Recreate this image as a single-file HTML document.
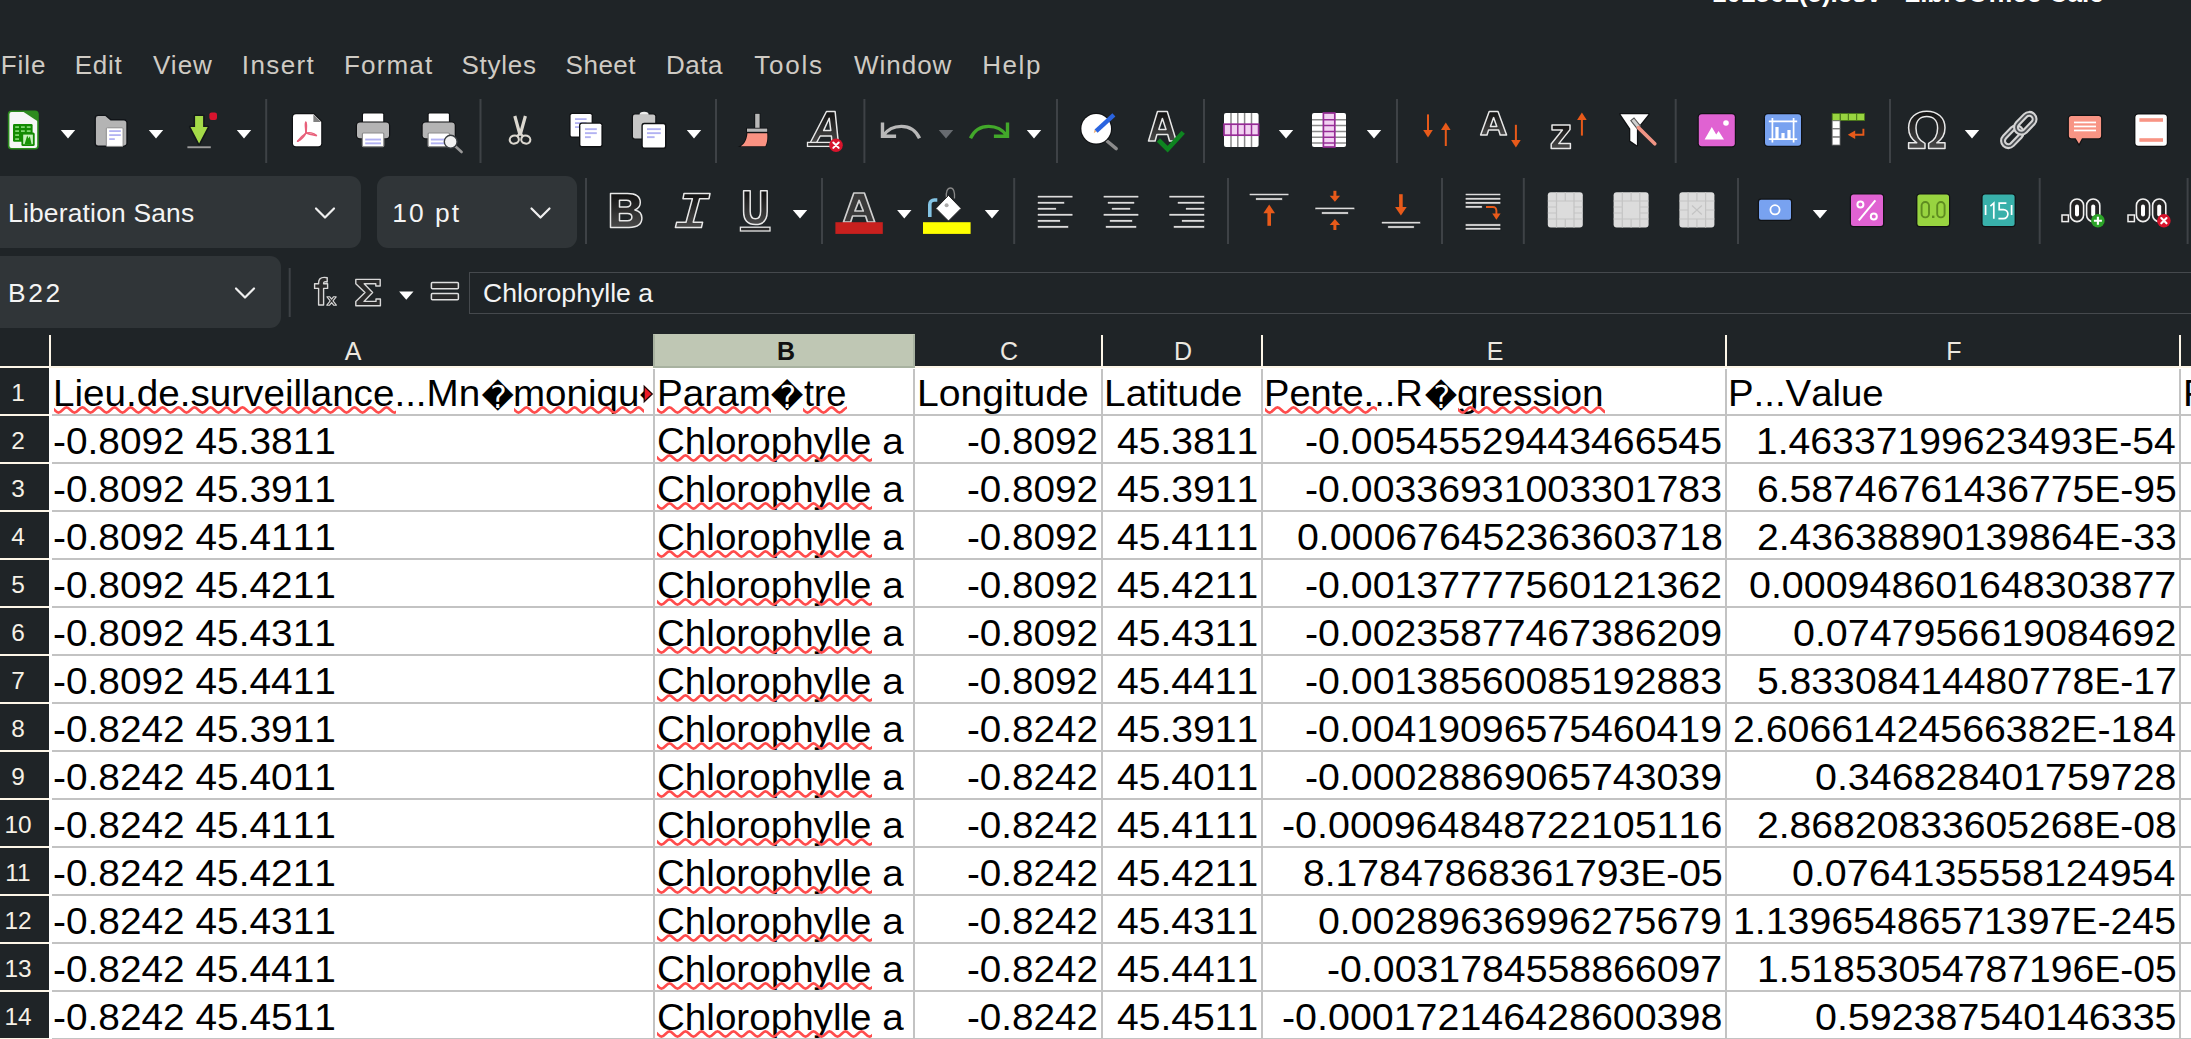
<!DOCTYPE html><html><head><meta charset="utf-8"><title>LibreOffice Calc</title><style>html,body{margin:0;padding:0;background:#1f2427;}
#app{position:relative;width:2191px;height:1039px;overflow:hidden;background:#1f2427;font-family:"Liberation Sans",sans-serif;color:#f2f2f2;}
#app *{box-sizing:border-box;}
#title{position:absolute;left:1712px;top:-22.6px;line-height:32px;font-size:26px;font-weight:bold;color:#fff;white-space:nowrap;}
.menu{position:absolute;top:49px;font-size:26px;line-height:32px;color:#cfcbc4;white-space:nowrap;}
.sep{position:absolute;width:2px;background:#3d4145;}
.box{position:absolute;background:#303538;border-radius:11px;}
.ui{position:absolute;font-size:26.4px;line-height:32px;color:#f4f4f4;white-space:nowrap;}
svg{position:absolute;overflow:visible;}
#sheet{position:absolute;left:0;top:0;width:2191px;height:1039px;}
#sheet:before{content:"";position:absolute;left:49px;top:366px;width:2142px;height:673px;background:#fff;}
.ch{position:absolute;top:335px;height:31px;text-align:center;font-size:25px;line-height:31px;color:#ece8e0;}
.ch span{position:relative;left:1px;top:1px;}
.ch.sel{top:334px;height:34px;background:#bfc7b4;color:#111;font-weight:bold;border:2px solid #a8b2a0;border-top:1px solid #bfc7b4;}
.ch.sel span{top:1px;left:2px;}
.chl{position:absolute;top:335px;width:2px;height:33px;background:#fdf6e8;}
.chb{position:absolute;top:366px;left:0;width:2191px;height:2px;background:#fdf6e8;}
.rh{position:absolute;left:0;width:49px;height:46px;background:#1f2427;font-size:24.4px;line-height:46px;color:#f6f1e6;}
.rh span{position:absolute;left:-7px;width:50px;text-align:center;top:2px;}
.rhl{position:absolute;left:0;width:49px;height:2px;background:#fdf6e8;}
.gh{position:absolute;left:52px;width:2139px;height:2px;background:#c3c3c3;}
.gv{position:absolute;top:369px;width:2px;height:670px;background:#c3c3c3;}
.t{position:absolute;height:47px;font-size:37.5px;line-height:47px;color:#000;white-space:pre;font-kerning:none;transform-origin:0 50%;padding-top:3px;}
.rc{position:absolute;height:47px;line-height:47px;color:#000;font-family:"DejaVu Sans",sans-serif;padding-top:6.8px;}
.clipA{position:absolute;left:0;top:0;width:644px;height:1039px;overflow:hidden;}
.wv{overflow:hidden;}
.wv path{fill:none;stroke:#ff4c4c;stroke-width:2.6;}
.inp{position:absolute;left:469px;top:272px;width:1740px;height:42px;border:1.3px solid #45494d;background:#1f2427;}
</style></head><body>
<div id="app">
<div id="title">101561(5).csv - LibreOffice Calc</div>
<div class="menu" style="left:0.7px;letter-spacing:0.93px">File</div>
<div class="menu" style="left:74.7px;letter-spacing:0.77px">Edit</div>
<div class="menu" style="left:153px;letter-spacing:1px">View</div>
<div class="menu" style="left:241.8px;letter-spacing:1.4px">Insert</div>
<div class="menu" style="left:344px;letter-spacing:1.16px">Format</div>
<div class="menu" style="left:461.5px;letter-spacing:0.74px">Styles</div>
<div class="menu" style="left:565.6px;letter-spacing:0.5px">Sheet</div>
<div class="menu" style="left:666px;letter-spacing:0.5px">Data</div>
<div class="menu" style="left:754.3px;letter-spacing:1.75px">Tools</div>
<div class="menu" style="left:853.9px;letter-spacing:1.0px">Window</div>
<div class="menu" style="left:982.2px;letter-spacing:1.6px">Help</div>
<div class="box" style="left:-20px;top:176px;width:381px;height:72px"></div>
<div class="box" style="left:377px;top:176px;width:200px;height:72px"></div>
<div class="box" style="left:-20px;top:256px;width:301px;height:72px"></div>
<div class="ui" style="left:8px;top:197px;letter-spacing:.2px">Liberation Sans</div>
<div class="ui" style="left:392.3px;top:197px;letter-spacing:2px">10 pt</div>
<div class="ui" style="left:8px;top:277px;letter-spacing:2.6px">B22</div>
<div class="inp"></div>
<div class="ui" style="left:483px;top:277px;font-size:26.6px">Chlorophylle a</div>
<svg id="tb" style="left:0;top:0" width="2191" height="335" viewBox="0 0 2191 335">
<defs><linearGradient id="gd" x1="0" y1="0" x2="0" y2="1"><stop offset="0" stop-color="#111"/><stop offset="1" stop-color="#4a4a4a"/></linearGradient></defs>
<rect x="265.2" y="99" width="2" height="64" fill="#3e4246"/>
<rect x="479.5" y="99" width="2" height="64" fill="#3e4246"/>
<rect x="715.0" y="99" width="2" height="64" fill="#3e4246"/>
<rect x="863.4" y="99" width="2" height="64" fill="#3e4246"/>
<rect x="1056.0" y="99" width="2" height="64" fill="#3e4246"/>
<rect x="1203.0" y="99" width="2" height="64" fill="#3e4246"/>
<rect x="1396.0" y="99" width="2" height="64" fill="#3e4246"/>
<rect x="1674.7" y="99" width="2" height="64" fill="#3e4246"/>
<rect x="1889.0" y="99" width="2" height="64" fill="#3e4246"/>
<rect x="585.0" y="178" width="2" height="66" fill="#3e4246"/>
<rect x="821.0" y="178" width="2" height="66" fill="#3e4246"/>
<rect x="1013.2" y="178" width="2" height="66" fill="#3e4246"/>
<rect x="1227.0" y="178" width="2" height="66" fill="#3e4246"/>
<rect x="1441.0" y="178" width="2" height="66" fill="#3e4246"/>
<rect x="1522.8" y="178" width="2" height="66" fill="#3e4246"/>
<rect x="1737.0" y="178" width="2" height="66" fill="#3e4246"/>
<rect x="2038.7" y="178" width="2" height="66" fill="#3e4246"/>
<rect x="2186.6" y="178" width="2" height="66" fill="#3e4246"/>
<rect x="288.7" y="268" width="2" height="49" fill="#3e4246"/>
<path d="M60.8 130h14.4l-7.2 8.4z" fill="#fff"/>
<path d="M148.8 130h14.4l-7.2 8.4z" fill="#fff"/>
<path d="M236.8 130h14.4l-7.2 8.4z" fill="#fff"/>
<path d="M686.8 130h14.4l-7.2 8.4z" fill="#fff"/>
<path d="M1026.8 130h14.4l-7.2 8.4z" fill="#fff"/>
<path d="M1278.8 130h14.4l-7.2 8.4z" fill="#fff"/>
<path d="M1366.8 130h14.4l-7.2 8.4z" fill="#fff"/>
<path d="M1964.8 130h14.4l-7.2 8.4z" fill="#fff"/>
<path d="M938.8 130h14.4l-7.2 8.4z" fill="#676b70"/>
<path d="M792.8 210h14.4l-7.2 8.4z" fill="#fff"/>
<path d="M897.1 210h14.4l-7.2 8.4z" fill="#fff"/>
<path d="M984.8 210h14.4l-7.2 8.4z" fill="#fff"/>
<path d="M1812.8 210h14.4l-7.2 8.4z" fill="#fff"/>
<path d="M399.1 291.5h14.4l-7.2 8.2z" fill="#fff"/>
<path d="M316 208.5L325.0 217.5L334 208.5" fill="none" stroke="#f0f0f0" stroke-width="2.2" stroke-linecap="round" stroke-linejoin="round"/>
<path d="M531.5 208.5L540.5 217.5L549.5 208.5" fill="none" stroke="#f0f0f0" stroke-width="2.2" stroke-linecap="round" stroke-linejoin="round"/>
<path d="M236 288.5L245.0 297.5L254 288.5" fill="none" stroke="#f0f0f0" stroke-width="2.2" stroke-linecap="round" stroke-linejoin="round"/>
<!-- ROW 1 -->
<!-- new spreadsheet -->
<g>
<rect x="8.6" y="111.3" width="29.4" height="37.4" rx="3" fill="#f6f6f6" stroke="#2a8a1c" stroke-width="1.6"/>
<path d="M22.5 111.3H35a3 3 0 0 1 3 3V121.5z" fill="#2e8b1f"/>
<rect x="13" y="124" width="19.6" height="17.8" rx="1.2" fill="#128a02"/>
<g fill="#7ed66e"><rect x="15.2" y="126.2" width="3.8" height="1.8"/><rect x="21" y="126.2" width="3.8" height="1.8"/><rect x="26.8" y="126.2" width="3.8" height="1.8"/>
<rect x="15.2" y="130.2" width="3.8" height="1.8"/><rect x="21" y="130.2" width="3.8" height="1.8"/><rect x="26.8" y="130.2" width="3.8" height="1.8"/>
<rect x="15.2" y="134.2" width="3.8" height="1.8"/><rect x="15.2" y="138.2" width="3.8" height="1.8"/></g>
<rect x="21.4" y="132.6" width="13.3" height="13.4" rx="1.5" fill="#128a02"/>
<rect x="23.2" y="134.6" width="9.7" height="9.6" fill="#c6f0bc"/>
<path d="M24.6 144.2L27.2 135.4L28.6 138.6L29.8 136.2L31.6 144.2z" fill="#1a9408"/>
</g>
<!-- open -->
<g>
<path d="M95.2 118.4a3 3 0 0 1 3-3h7.6l5 4.4h13.2a3 3 0 0 1 3 3v20.4a3 3 0 0 1-3 3H98.2a3 3 0 0 1-3-3z" fill="#b4b4b4" stroke="#111418" stroke-width="1.4"/>
<rect x="106.3" y="127.8" width="16.8" height="18.6" rx="1" fill="#fff" stroke="#8a8a8a" stroke-width="1"/>
<g fill="#b2b2f2"><rect x="109.2" y="130.2" width="11.6" height="1.8"/><rect x="109.2" y="134.2" width="11.6" height="1.8"/><rect x="109.2" y="138.2" width="5.6" height="1.8"/></g>
</g>
<!-- save -->
<g>
<path d="M195.100 116h8v11h4.600L199.100 143.600L190.500 127h4.600z" fill="#a4da48" stroke="#14181a" stroke-width="3.2" paint-order="stroke" stroke-linejoin="round"/>
<rect x="187.400" y="146.300" width="23.400" height="1.900" fill="#9c9c9c"/>
<rect x="209.400" y="112.400" width="7.600" height="7.600" rx="2.200" fill="#d8142e"/>
</g>
<!-- pdf -->
<g>
<path d="M296 114.200h17.600l7.600 7.600v21.400a3 3 0 0 1-3 3H296a3 3 0 0 1-3-3v-26a3 3 0 0 1 3-3z" fill="#fff" stroke="#101214" stroke-width="2.4" paint-order="stroke"/>
<path d="M313.400 114.400l7.600 7.600h-7.600z" fill="#808080"/>
<g fill="none" stroke="#e8607a" stroke-width="1.500" stroke-linecap="round" stroke-linejoin="round">
<path d="M305.800 122.300c-1.300 1.200 .300 6.800 .000 10.800c-1.800 3.800 -5.000 6.600 -8.200 8.200"/>
<path d="M305.800 122.300c1.400 1.000 .300 6.400 .400 10.400c2.800 2.000 7.200 2.400 10.200 2.800"/>
<path d="M297.600 141.300c2.200 -3.000 5.000 -6.000 8.200 -8.000c3.200 -1.200 7.800 -.600 10.600 2.200"/>
</g>
</g>
<!-- print -->
<g>
<rect x="363" y="113.6" width="20.2" height="10" rx="1" fill="#fff" stroke="#101214" stroke-width="2.4" paint-order="stroke"/>
<rect x="357" y="122.6" width="32" height="15.6" rx="3" fill="#b4b4b4" stroke="#101214" stroke-width="2.4" paint-order="stroke"/>
<rect x="362.4" y="133" width="21.4" height="13.6" rx="1" fill="#fff" stroke="#8c8c8c" stroke-width="1.2"/>
<rect x="365.200" y="138.600" width="15.800" height="1.900" fill="#b2b2f2"/><rect x="365.200" y="142.400" width="15.800" height="1.900" fill="#b2b2f2"/>
</g>
<!-- print preview -->
<g>
<g transform="translate(65.700 0)">
<rect x="363" y="113.6" width="20.2" height="10" rx="1" fill="#fff" stroke="#101214" stroke-width="2.4" paint-order="stroke"/>
<rect x="357" y="122.6" width="32" height="15.6" rx="3" fill="#b4b4b4" stroke="#101214" stroke-width="2.4" paint-order="stroke"/>
<rect x="362.4" y="133" width="21.4" height="13.6" rx="1" fill="#fff" stroke="#8c8c8c" stroke-width="1.2"/>
<rect x="365.200" y="138.600" width="15.800" height="1.900" fill="#b2b2f2"/><rect x="365.200" y="142.400" width="15.800" height="1.900" fill="#b2b2f2"/>
</g>
<line x1="455" y1="146" x2="461.600" y2="152" stroke="#9a9a9a" stroke-width="2.600" stroke-linecap="round"/>
<circle cx="450.700" cy="141.700" r="6.400" fill="#f2f2f2" stroke="#3a3e42" stroke-width="1.400"/>
</g>
<!-- cut -->
<g fill="none" stroke="#dcd8d0" stroke-width="2.100" stroke-linejoin="round">
<path d="M514.800 116l5.400 19.500M525.400 116L520 135.500" stroke-width="3.200"/>
<ellipse cx="514.300" cy="139.600" rx="4.600" ry="4" transform="rotate(-20 514.300 139.600)"/>
<ellipse cx="525.800" cy="139.600" rx="4.600" ry="4" transform="rotate(20 525.800 139.600)"/>
<path d="M517.400 136.200l2.700 -3.600l2.700 3.600"/>
</g>
<!-- copy -->
<g>
<rect x="570.600" y="114" width="21" height="22.600" rx="1.500" fill="#fff" stroke="#101214" stroke-width="2.4" paint-order="stroke"/>
<g fill="#b2b2f2"><rect x="575" y="118.200" width="11.600" height="1.800"/><rect x="575" y="122.200" width="11.600" height="1.800"/><rect x="575" y="126.200" width="5" height="1.800"/></g>
<rect x="580.400" y="123.800" width="21" height="22.200" rx="1.500" fill="#fff" stroke="#101214" stroke-width="2.8" paint-order="stroke"/>
<g fill="#b2b2f2"><rect x="585" y="128.200" width="11.800" height="1.900"/><rect x="585" y="132.200" width="11.800" height="1.900"/><rect x="585" y="136.200" width="5.800" height="1.900"/></g>
</g>
<!-- paste -->
<g>
<rect x="633" y="114.600" width="22.200" height="23.800" rx="2" fill="#c6c6c6" stroke="#101214" stroke-width="2.4" paint-order="stroke"/>
<path d="M639.500 114.800a4.600 3 0 0 1 9.200 0z" fill="#ededed"/>
<rect x="642.800" y="124.200" width="22.200" height="23.200" rx="1.500" fill="#fff" stroke="#101214" stroke-width="2.8" paint-order="stroke"/>
<g fill="#b2b2f2"><rect x="647" y="128.200" width="13.800" height="1.900"/><rect x="647" y="132.200" width="13.800" height="1.900"/><rect x="647" y="136.200" width="7.600" height="1.900"/></g>
</g>
<!-- clone brush -->
<g>
<rect x="755.200" y="113.800" width="4.400" height="16" fill="#b8b8b8" stroke="#101214" stroke-width="1.6" paint-order="stroke"/>
<rect x="747" y="128.600" width="20.200" height="3.200" fill="#b8b8b8" stroke="#101214" stroke-width="1.6" paint-order="stroke"/>
<path d="M747.400 133.200h19.800c.400 4.400 .200 9.400 -1.800 13.000h-24.600c4.600 -3.000 6.200 -7.800 6.600 -13.000z" fill="#fa9282" stroke="#101214" stroke-width="1.8" paint-order="stroke"/>
</g>
<!-- clear formatting -->
<g>
<path d="M826.500 111.500h8.600l3.400 32.500h-6.400l-.700 -8h-11.200l-4.400 8h-6.200zM829.200 118.200l-5.600 12.400h7.200z" fill="url(#gd)" stroke="#e8e8e8" stroke-width="1.500" stroke-linejoin="round" fill-rule="evenodd"/>
<rect x="807.500" y="142.400" width="23" height="4" fill="#2a2a2a" stroke="#e8e8e8" stroke-width="1.300"/>
<circle cx="836" cy="145.200" r="6.800" fill="#d8142c"/>
<path d="M833.300 142.500l5.400 5.400m0 -5.400l-5.400 5.400" stroke="#fff" stroke-width="2" stroke-linecap="round"/>
</g>
<!-- undo -->
<path d="M882.500 122.600v13.600h13.600M883.500 135.400c7.500 -11.000 28.000 -14.000 36.000 2.800" fill="none" stroke="#b8b8b8" stroke-width="3.400"/>
<!-- redo -->
<path d="M1007.500 122.600v13.600h-13.600M1006.500 135.400c-7.500 -11.000 -28.000 -14.000 -36.000 2.800" fill="none" stroke="#42a82a" stroke-width="3.400"/>
<!-- find & replace -->
<g>
<line x1="1107" y1="141" x2="1116.200" y2="148.600" stroke="#8c8c8c" stroke-width="3.400" stroke-linecap="round"/>
<circle cx="1096.200" cy="128.800" r="14.800" fill="#fff" stroke="#101214" stroke-width="2.4" paint-order="stroke"/>
<path d="M1096.500 131.200l-2.700 2.100l.8 -3.700z" fill="#f0b070"/>
<path d="M1094.600 129.600l17.800 -16.400l3 3.200l-17.800 16.400z" fill="#2a64e0"/>
</g>
<!-- spelling -->
<g>
<path d="M1157.500 111.500h9.800l9 29.500h-6.800l-1.800 -6.500h-10.800l-1.800 6.500h-6.600zM1162.400 118.400l-3.600 11h7.200z" fill="url(#gd)" stroke="#e8e8e8" stroke-width="1.500" stroke-linejoin="round" fill-rule="evenodd"/>
<path d="M1158.400 140l9.200 9.200l15.600 -17" fill="none" stroke="#0e8420" stroke-width="4.600"/>
</g>
<!-- insert rows -->
<g>
<rect x="1224" y="113" width="34.600" height="34" rx="2" fill="#fff"/>
<g stroke="#8a8a8a" stroke-width="1.500"><path d="M1231 113v34M1237.800 113v34M1244.600 113v34M1251.500 113v34"/></g>
<rect x="1224" y="124.200" width="34.600" height="11" fill="#f2d2f2" stroke="#962c96" stroke-width="1.700"/>
<g stroke="#962c96" stroke-width="1.500"><path d="M1231 124.200v11M1237.800 124.200v11M1244.600 124.200v11M1251.500 124.200v11"/></g>
</g>
<!-- insert cols -->
<g>
<rect x="1312" y="113" width="34" height="34" rx="2" fill="#fff"/>
<g stroke="#8a8a8a" stroke-width="1.500"><path d="M1312 119.800h34M1312 125.600h34M1312 131.400h34M1312 137.200h34M1312 143h34" /></g>
<rect x="1323.400" y="113" width="11.400" height="34" fill="#f2d2f2" stroke="#962c96" stroke-width="1.700"/>
<g stroke="#962c96" stroke-width="1.500"><path d="M1323.400 119.800h11.400M1323.400 125.600h11.400M1323.400 131.400h11.400M1323.400 137.200h11.400M1323.400 143h11.400"/></g>
</g>
<!-- sort -->
<g fill="#e85a1a" stroke="none">
<rect x="1427" y="114.400" width="2" height="16"/><path d="M1423.200 130l4.800 7.600l4.800 -7.600z"/>
<rect x="1444.800" y="130" width="2" height="16"/><path d="M1441 130l4.800 -7.600l4.800 7.600z"/>
</g>
<!-- sort asc -->
<g>
<path d="M1489.200 111.500h8.800l8.600 23.500h-6.400l-1.600 -5h-10l-1.600 5h-6.400zM1493.600 117.600l-3.200 9h6.400z" fill="url(#gd)" stroke="#e8e8e8" stroke-width="1.500" stroke-linejoin="round" fill-rule="evenodd"/>
<g fill="#e85a1a"><rect x="1514.900" y="124.800" width="2" height="16"/><path d="M1511.100 140l4.800 7.600l4.800 -7.600z"/></g>
</g>
<!-- sort desc -->
<g>
<path d="M1552 125h18v4.600l-11.200 14h11.600v5h-19.200v-4.600l11.200 -14h-10.400z" fill="url(#gd)" stroke="#e8e8e8" stroke-width="1.500" stroke-linejoin="round"/>
<g fill="#e85a1a"><rect x="1580.900" y="119.600" width="2" height="16"/><path d="M1577.100 120l4.800 -7.600l4.800 7.600z"/></g>
</g>
<!-- autofilter -->
<g>
<path d="M1620.500 114.200h28l-11.600 14.600v16.400l-6.600 -4.400v-12z" fill="#fff" stroke="#101214" stroke-width="2.6" paint-order="stroke" stroke-linejoin="round"/>
<path d="M1630.800 120.600l3.200 -2.600l6.400 8l-3.200 2.600z" fill="#d0d0d0" stroke="#555" stroke-width="1.100"/>
<path d="M1638.400 127.600l16.400 16.200" stroke="#f09484" stroke-width="3.600" stroke-linecap="round"/>
</g>
<!-- image -->
<g>
<rect x="1698.800" y="114.200" width="36" height="32" rx="3" fill="#e062d2" stroke="#101214" stroke-width="2.4" paint-order="stroke"/>
<circle cx="1726" cy="123" r="2.800" fill="#fff"/>
<path d="M1704.600 139.400l7.200 -12.400l4.400 7.400l2.400 -3.400l5.400 8.400z" fill="#fff"/>
</g>
<!-- chart -->
<g>
<rect x="1765" y="114.200" width="36" height="31.600" rx="3" fill="#78a2f0" stroke="#101214" stroke-width="2.4" paint-order="stroke"/>
<g stroke="#fff" stroke-width="1.700" fill="none"><path d="M1772.400 118v24.600M1793.600 118v24.600M1768.800 121.400h28.400M1768.800 139.200h28.400"/></g>
<g fill="#fff"><rect x="1775.400" y="127" width="3.200" height="12"/><rect x="1781.400" y="133" width="3.200" height="6"/><rect x="1787.400" y="130" width="3.200" height="9"/></g>
</g>
<!-- pivot -->
<g>
<g fill="#98d440" stroke="#4a7a18" stroke-width=".800"><rect x="1832.200" y="113.600" width="7.800" height="6.800"/><rect x="1840.400" y="113.600" width="7.800" height="6.800"/><rect x="1848.600" y="113.600" width="7.800" height="6.800"/><rect x="1856.800" y="113.600" width="7.800" height="6.800"/></g>
<g fill="#fff" stroke="#777" stroke-width=".800"><rect x="1832.200" y="120.800" width="7.800" height="7.800"/><rect x="1832.200" y="129" width="7.800" height="7.800"/><rect x="1832.200" y="137.200" width="7.800" height="7.800"/></g>
<path d="M1863.400 128.800v6h-10" fill="none" stroke="#e85a1a" stroke-width="1.900"/>
<path d="M1855.200 130.600l-7.400 4.200l7.400 4.200z" fill="#e85a1a"/>
</g>
<!-- omega -->
<path d="M1908.600 148.400v-5.600h8.200c-5.600 -3.600 -8.200 -8.600 -8.200 -15.000c0 -10.000 7.400 -16.600 18.200 -16.600s18.200 6.600 18.200 16.600c0 6.400 -2.600 11.400 -8.200 15.000h8.200v5.600h-16.400v-5.000c6.200 -3.000 9.000 -8.000 9.000 -15.200c0 -7.400 -4.200 -11.600 -10.800 -11.600s-10.800 4.200 -10.800 11.600c0 7.200 2.800 12.200 9.000 15.200v5.000z" fill="url(#gd)" stroke="#e8e8e8" stroke-width="1.500" stroke-linejoin="round"/>
<!-- link -->
<g fill="none" transform="rotate(-46 2018.800 130)">
<rect x="1998.450" y="124.700" width="22" height="10.600" rx="5.300" stroke-width="6" stroke="#d4d4d4"/>
<rect x="1998.450" y="124.700" width="22" height="10.600" rx="5.300" stroke-width="1.800" stroke="#4a4e52"/>
<rect x="2017.150" y="124.700" width="22" height="10.600" rx="5.300" stroke-width="6" stroke="#d4d4d4"/>
<rect x="2017.150" y="124.700" width="22" height="10.600" rx="5.300" stroke-width="1.800" stroke="#4a4e52"/>
</g>
<!-- comment -->
<g>
<path d="M2071.500 116h27a2.600 2.600 0 0 1 2.600 2.600v17a2.600 2.600 0 0 1 -2.600 2.600h-16.500l-3 5.600l-3.400 -5.600h-4.100a2.600 2.600 0 0 1 -2.600 -2.600v-17a2.600 2.600 0 0 1 2.600 -2.600z" fill="#f89484" stroke="#101214" stroke-width="2.4" paint-order="stroke"/>
<g fill="#fff"><rect x="2074" y="121.600" width="22" height="1.700"/><rect x="2074" y="125.600" width="22" height="1.700"/><rect x="2074" y="129.600" width="22" height="1.700"/><rect x="2074" y="133.600" width="22" height="1.700" opacity=".0"/></g>
</g>
<!-- header footer -->
<g>
<rect x="2135.400" y="114.400" width="31.400" height="31.400" rx="3" fill="#fff" stroke="#101214" stroke-width="2.4" paint-order="stroke"/>
<rect x="2139.400" y="118.200" width="23.600" height="3.600" fill="#f89484"/><rect x="2139.400" y="138.200" width="23.600" height="3.600" fill="#f89484"/>
</g>
<!-- ROW 2 -->
<!-- bold -->
<path d="M610.500 193.500h17c8 0 12.800 3.200 12.800 9c0 3.800 -2.200 6.200 -5.400 7.400c4.400 1 7 4 7 8.200c0 6 -4.800 9.400 -13 9.400h-18.400zM619.500 200.200v6.800h7c2.600 0 4.200 -1.200 4.200 -3.400s-1.600 -3.400 -4.200 -3.400zM619.500 213.400v7.400h7.800c3 0 4.600 -1.400 4.600 -3.700s-1.600 -3.700 -4.600 -3.700z" fill="url(#gd)" stroke="#e8e8e8" stroke-width="1.500" stroke-linejoin="round" fill-rule="evenodd"/>
<!-- italic -->
<path d="M684 193.500h26l-1 5.200h-9.400l-6.400 23.600h9.400l-1.200 5.200h-26l1.200 -5.200h9.400l6.400 -23.600h-9.400z" fill="url(#gd)" stroke="#e8e8e8" stroke-width="1.500" stroke-linejoin="round"/>
<!-- underline -->
<g>
<path d="M743.600 190.800h6.600v20.400c0 5 1.800 7.600 5.200 7.600s5.200 -2.600 5.200 -7.600v-20.400h6.600v20.800c0 8.600 -4.200 13 -11.800 13s-11.800 -4.400 -11.800 -13z" fill="url(#gd)" stroke="#e8e8e8" stroke-width="1.500" stroke-linejoin="round"/>
<rect x="740.400" y="227.200" width="29.600" height="3.800" fill="#2a2a2a" stroke="#e8e8e8" stroke-width="1.300"/>
</g>
<!-- font color -->
<g>
<path d="M853.800 193h10.600l10.400 29.200h-7.200l-2 -6.200h-13l-2 6.200h-7.200zM859.100 200.400l-4.200 10.600h8.400z" fill="#3a3a3a" stroke="#d0d0d0" stroke-width="1.700" stroke-linejoin="round" fill-rule="evenodd"/>
<rect x="835.400" y="222.200" width="47.400" height="11.700" fill="#c8201e"/>
</g>
<!-- background color -->
<g>
<path d="M929.800 217v-12.500a4.500 4.500 0 0 1 4.500 -4.500h3" fill="none" stroke="#84c4e4" stroke-width="3.600"/>
<path d="M946.500 198.500c-1 -7 1 -10.500 4 -10.500s4.500 4 4 10.500" fill="none" stroke="#888" stroke-width="1.300"/>
<path d="M948.500 195.400l12.600 13l-12.600 12.600l-12.600 -12.600z" fill="#fff" stroke="#222" stroke-width="1"/>
<circle cx="946.600" cy="205.200" r="2" fill="#aaa"/>
<rect x="923" y="222.200" width="47.600" height="11.700" fill="#ffff00"/>
</g>
<!-- align left/center/right -->
<g fill="#dcdcdc" stroke="#15181b" stroke-width=".6">
<rect x="1037.300" y="195.500" width="35.600" height="2.400"/><rect x="1037.300" y="201.600" width="27.300" height="2.400"/><rect x="1037.300" y="207.600" width="19" height="2.400"/><rect x="1037.300" y="213.600" width="35.600" height="2.400"/><rect x="1037.300" y="219.700" width="23" height="2.400"/><rect x="1037.300" y="225.700" width="31.300" height="2.400"/>
<rect x="1103.200" y="195.500" width="35.600" height="2.400"/><rect x="1107.400" y="201.600" width="27.300" height="2.400"/><rect x="1111.500" y="207.600" width="19" height="2.400"/><rect x="1103.200" y="213.600" width="35.600" height="2.400"/><rect x="1109.500" y="219.700" width="23" height="2.400"/><rect x="1105.400" y="225.700" width="31.300" height="2.400"/>
<rect x="1169" y="195.500" width="35.600" height="2.400"/><rect x="1177.300" y="201.600" width="27.300" height="2.400"/><rect x="1185.600" y="207.600" width="19" height="2.400"/><rect x="1169" y="213.600" width="35.600" height="2.400"/><rect x="1181.600" y="219.700" width="23" height="2.400"/><rect x="1173.300" y="225.700" width="31.300" height="2.400"/>
</g>
<!-- valign top -->
<g fill="#dcdcdc" stroke="#15181b" stroke-width=".6"><rect x="1249.200" y="193.300" width="39.700" height="2.400"/><rect x="1255.600" y="197.800" width="26.900" height="2.400"/></g>
<g fill="#e85a1a"><rect x="1267.400" y="212" width="3.600" height="13.800"/><path d="M1263.400 213.200l5.800 -8.600l5.800 8.600z"/></g>
<!-- valign center -->
<g fill="#dcdcdc" stroke="#15181b" stroke-width=".6"><rect x="1315" y="207.200" width="39.800" height="2.400"/><rect x="1321.400" y="211.800" width="27" height="2.400"/></g>
<g fill="#e85a1a"><rect x="1333.400" y="190.800" width="3" height="6"/><path d="M1329.700 195.800l5.200 6l5.200 -6z"/><rect x="1333.400" y="224" width="3" height="6"/><path d="M1329.700 225l5.200 -6l5.200 6z"/></g>
<!-- valign bottom -->
<g fill="#dcdcdc" stroke="#15181b" stroke-width=".6"><rect x="1381.400" y="221.500" width="39.200" height="2.400"/><rect x="1387.800" y="225.800" width="26.400" height="2.400"/></g>
<g fill="#e85a1a"><rect x="1399.100" y="194.200" width="3.600" height="13.800"/><path d="M1395.100 207l5.800 8.600l5.800 -8.600z"/></g>
<!-- wrap text -->
<g fill="#dcdcdc" stroke="#15181b" stroke-width=".6"><rect x="1465.200" y="193.300" width="35.600" height="2.400"/><rect x="1465.200" y="197.600" width="35.600" height="2.400"/><rect x="1465.200" y="201.700" width="35.600" height="2.400"/><rect x="1465.200" y="205.700" width="17" height="2.400"/><rect x="1465.200" y="223.800" width="35.600" height="2.400"/><rect x="1465.200" y="227.600" width="35.600" height="2.400"/></g>
<path d="M1486 207h7a3.400 3.400 0 0 1 3.400 3.400v4" fill="none" stroke="#e85a1a" stroke-width="1.900"/><path d="M1492.200 213.400l4.200 6.400l4.200 -6.400z" fill="#e85a1a"/>
<!-- merge icons (disabled) -->
<g>
<rect x="1547.800" y="192.200" width="35" height="35.400" rx="3" fill="#dcdcdc"/>
<g stroke="#c4c4c4" stroke-width="1.200" fill="none"><path d="M1547.800 201h35M1547.800 219h35M1556.500 192.200v8.800M1565.300 192.200v8.800M1574 192.200v8.800M1556.500 219v8.600M1565.300 219v8.600M1574 219v8.600M1556.500 201v18M1547.800 207h8.700M1547.800 213h8.700M1574 201v18M1574 207h8.800M1574 213h8.800"/></g>
</g>
<g transform="translate(65.800 0)">
<rect x="1547.800" y="192.200" width="35" height="35.400" rx="3" fill="#dcdcdc"/>
<g stroke="#c4c4c4" stroke-width="1.200" fill="none"><path d="M1547.800 201h35M1547.800 219h35M1556.500 192.200v8.800M1565.300 192.200v8.800M1574 192.200v8.800M1556.500 219v8.600M1565.300 219v8.600M1574 219v8.600M1556.500 201v18M1547.800 207h8.700M1547.800 213h8.700M1574 201v18M1574 207h8.800M1574 213h8.800"/></g>
</g>
<g>
<rect x="1679.400" y="192.200" width="35" height="35.400" rx="3" fill="#dcdcdc"/>
<g stroke="#c4c4c4" stroke-width="1.200" fill="none"><path d="M1679.400 201h35M1679.400 219h35M1688.100 192.200v35.400M1705.600 192.200v35.400M1696.900 192.200v8.800M1696.900 219v8.600M1679.400 210h8.700M1705.600 210h8.800M1692 205.500l4.900 4.500l-4.900 4.500M1701.800 205.500l-4.900 4.500l4.900 4.500"/></g>
</g>
<!-- currency -->
<g>
<rect x="1759" y="199.800" width="32" height="20" rx="2" fill="#78a2f0" stroke="#101214" stroke-width="2.4" paint-order="stroke"/>
<circle cx="1775" cy="209.800" r="4.600" fill="none" stroke="#fff" stroke-width="1.800"/>
</g>
<!-- percent -->
<g>
<rect x="1851" y="194.600" width="32" height="31.400" rx="2.500" fill="#e062d2" stroke="#101214" stroke-width="2.4" paint-order="stroke"/>
<g fill="none" stroke="#fff" stroke-width="2"><circle cx="1860.400" cy="204.400" r="3"/><circle cx="1873.800" cy="216.400" r="3"/><path d="M1875.400 200.400l-16.600 20"/></g>
</g>
<!-- number -->
<g>
<rect x="1917.400" y="194.600" width="31.600" height="31.400" rx="2.500" fill="#98d440" stroke="#101214" stroke-width="2.4" paint-order="stroke"/>
<g fill="none" stroke="#5e8c20" stroke-width="1.900"><rect x="1921.600" y="202" width="7.400" height="15.400" rx="3.600"/><rect x="1937.200" y="202" width="7.400" height="15.400" rx="3.600"/></g>
<rect x="1932" y="215.600" width="2.400" height="2.400" fill="#5e8c20"/>
</g>
<!-- date -->
<g>
<rect x="1982.600" y="194.600" width="32" height="31.400" rx="2.500" fill="#38b0aa" stroke="#101214" stroke-width="2.4" paint-order="stroke"/>
<g fill="none" stroke="#fff" stroke-width="1.700"><path d="M1985.600 205v10M2011.600 205v10M1990.400 206.200l3.400 -3v15.600M2006.400 203.200h-7.200v6.400h4.200a3.400 3.400 0 0 1 0 9.000h-5"/></g>
</g>
<!-- add decimal -->
<g>
<rect x="2062" y="215" width="6.4" height="6.600" fill="#222" stroke="#f0f0f0" stroke-width="1.500"/>
<rect x="2070.400" y="199" width="13.200" height="22.600" rx="6.600" fill="#242424" stroke="#f0f0f0" stroke-width="1.600"/>
<rect x="2075" y="204.400" width="4" height="12" rx="2" fill="#fff"/>
<rect x="2086.600" y="199" width="13.200" height="22.600" rx="6.600" fill="#242424" stroke="#f0f0f0" stroke-width="1.600"/>
<rect x="2091.200" y="204.400" width="4" height="12" rx="2" fill="#fff"/>
</g>
<circle cx="2097.900" cy="220.700" r="6.800" fill="#2ca428"/><path d="M2093.900 220.700h8m-4 -4v8" stroke="#fff" stroke-width="2.100"/>
<g transform="translate(66 0)">
<rect x="2062" y="215" width="6.4" height="6.600" fill="#222" stroke="#f0f0f0" stroke-width="1.500"/>
<rect x="2070.400" y="199" width="13.200" height="22.600" rx="6.600" fill="#242424" stroke="#f0f0f0" stroke-width="1.600"/>
<rect x="2075" y="204.400" width="4" height="12" rx="2" fill="#fff"/>
<rect x="2086.600" y="199" width="13.200" height="22.600" rx="6.600" fill="#242424" stroke="#f0f0f0" stroke-width="1.600"/>
<rect x="2091.200" y="204.400" width="4" height="12" rx="2" fill="#fff"/>
</g>
<circle cx="2163.900" cy="220.700" r="6.800" fill="#d8142c"/><path d="M2161.300 218.100l5.200 5.200m0 -5.200l-5.200 5.200" stroke="#fff" stroke-width="2.100" stroke-linecap="round"/>
<!-- formula bar icons -->
<g>
<path d="M322.600 305v-16.600h-4v-4.600h4v-1c0 -3.400 2 -5.400 5.600 -5.400c1.200 0 2.200 .2 3 .4v4.200c-2.200 -.6 -3.600 -.2 -3.600 1.600v.2h4v4.600h-4v16.600z" transform="translate(-4 0)" fill="#2a2a2a" stroke="#d8d8d8" stroke-width="1.400" stroke-linejoin="round"/>
<path d="M327 296.800h2.800l1.800 2.400l1.800 -2.400h2.800l-3.200 4.100l3.400 4.300h-2.800l-2 -2.600l-2 2.600h-2.800l3.400 -4.300z" fill="#2a2a2a" stroke="#d8d8d8" stroke-width="1.100" stroke-linejoin="round"/>
<path d="M355.800 279.400h24.400v6.600h-4.400v-2.200h-11.600l8.400 8.600l-8.600 9h12v-2.400h4.400v6.800h-24.600v-4.400l9.200 -9l-9.200 -8.600z" fill="#2a2a2a" stroke="#d8d8d8" stroke-width="1.400" stroke-linejoin="round"/>
<rect x="431.400" y="282.400" width="27" height="6.400" rx="1" fill="#2a2a2a" stroke="#e0e0e0" stroke-width="1.500"/>
<rect x="431.400" y="293.400" width="27" height="6.400" rx="1" fill="#2a2a2a" stroke="#e0e0e0" stroke-width="1.500"/>
</g>

</svg>
<div id="sheet">
<div class="chb"></div>
<div class="ch" style="left:51px;width:602px"><span>A</span></div>
<div class="ch sel" style="left:653px;width:262px"><span>B</span></div>
<div class="ch" style="left:915px;width:186px"><span>C</span></div>
<div class="ch" style="left:1103px;width:158px"><span>D</span></div>
<div class="ch" style="left:1263px;width:462px"><span>E</span></div>
<div class="ch" style="left:1727px;width:452px"><span>F</span></div>
<div class="chl" style="left:49px"></div>
<div class="chl" style="left:1101px"></div>
<div class="chl" style="left:1261px"></div>
<div class="chl" style="left:1725px"></div>
<div class="chl" style="left:2179px"></div>
<div class="rh" style="top:368px"><span>1</span></div>
<div class="rhl" style="top:414px"></div>
<div class="rh" style="top:416px"><span>2</span></div>
<div class="rhl" style="top:462px"></div>
<div class="rh" style="top:464px"><span>3</span></div>
<div class="rhl" style="top:510px"></div>
<div class="rh" style="top:512px"><span>4</span></div>
<div class="rhl" style="top:558px"></div>
<div class="rh" style="top:560px"><span>5</span></div>
<div class="rhl" style="top:606px"></div>
<div class="rh" style="top:608px"><span>6</span></div>
<div class="rhl" style="top:654px"></div>
<div class="rh" style="top:656px"><span>7</span></div>
<div class="rhl" style="top:702px"></div>
<div class="rh" style="top:704px"><span>8</span></div>
<div class="rhl" style="top:750px"></div>
<div class="rh" style="top:752px"><span>9</span></div>
<div class="rhl" style="top:798px"></div>
<div class="rh" style="top:800px"><span>10</span></div>
<div class="rhl" style="top:846px"></div>
<div class="rh" style="top:848px"><span>11</span></div>
<div class="rhl" style="top:894px"></div>
<div class="rh" style="top:896px"><span>12</span></div>
<div class="rhl" style="top:942px"></div>
<div class="rh" style="top:944px"><span>13</span></div>
<div class="rhl" style="top:990px"></div>
<div class="rh" style="top:992px"><span>14</span></div>
<div class="rhl" style="top:1038px"></div>
<div class="gh" style="top:414px"></div>
<div class="gh" style="top:462px"></div>
<div class="gh" style="top:510px"></div>
<div class="gh" style="top:558px"></div>
<div class="gh" style="top:606px"></div>
<div class="gh" style="top:654px"></div>
<div class="gh" style="top:702px"></div>
<div class="gh" style="top:750px"></div>
<div class="gh" style="top:798px"></div>
<div class="gh" style="top:846px"></div>
<div class="gh" style="top:894px"></div>
<div class="gh" style="top:942px"></div>
<div class="gh" style="top:990px"></div>
<div class="gh" style="top:1038px"></div>
<div class="gv" style="left:653px"></div>
<div class="gv" style="left:913px"></div>
<div class="gv" style="left:1101px"></div>
<div class="gv" style="left:1261px"></div>
<div class="gv" style="left:1725px"></div>
<div class="gv" style="left:2179px"></div>
<div class="clipA">
<span class="t " style="left:52.68px;top:367px;transform:scaleX(1.0300)">Lieu.de.surveillance...Mn</span>
<svg class="wv" style="left:53.5px;top:404.1px" width="342.1" height="12" viewBox="0 -6 342.1 12"><path d="M-11.5 2.6 C-8.59 2.6 -6.41 -2.6 -3.5 -2.6 C-0.59 -2.6 1.59 2.6 4.5 2.6 C7.41 2.6 9.59 -2.6 12.5 -2.6 C15.41 -2.6 17.59 2.6 20.5 2.6 C23.41 2.6 25.59 -2.6 28.5 -2.6 C31.41 -2.6 33.59 2.6 36.5 2.6 C39.41 2.6 41.59 -2.6 44.5 -2.6 C47.41 -2.6 49.59 2.6 52.5 2.6 C55.41 2.6 57.59 -2.6 60.5 -2.6 C63.41 -2.6 65.59 2.6 68.5 2.6 C71.41 2.6 73.59 -2.6 76.5 -2.6 C79.41 -2.6 81.59 2.6 84.5 2.6 C87.41 2.6 89.59 -2.6 92.5 -2.6 C95.41 -2.6 97.59 2.6 100.5 2.6 C103.41 2.6 105.59 -2.6 108.5 -2.6 C111.41 -2.6 113.59 2.6 116.5 2.6 C119.41 2.6 121.59 -2.6 124.5 -2.6 C127.41 -2.6 129.59 2.6 132.5 2.6 C135.41 2.6 137.59 -2.6 140.5 -2.6 C143.41 -2.6 145.59 2.6 148.5 2.6 C151.41 2.6 153.59 -2.6 156.5 -2.6 C159.41 -2.6 161.59 2.6 164.5 2.6 C167.41 2.6 169.59 -2.6 172.5 -2.6 C175.41 -2.6 177.59 2.6 180.5 2.6 C183.41 2.6 185.59 -2.6 188.5 -2.6 C191.41 -2.6 193.59 2.6 196.5 2.6 C199.41 2.6 201.59 -2.6 204.5 -2.6 C207.41 -2.6 209.59 2.6 212.5 2.6 C215.41 2.6 217.59 -2.6 220.5 -2.6 C223.41 -2.6 225.59 2.6 228.5 2.6 C231.41 2.6 233.59 -2.6 236.5 -2.6 C239.41 -2.6 241.59 2.6 244.5 2.6 C247.41 2.6 249.59 -2.6 252.5 -2.6 C255.41 -2.6 257.59 2.6 260.5 2.6 C263.41 2.6 265.59 -2.6 268.5 -2.6 C271.41 -2.6 273.59 2.6 276.5 2.6 C279.41 2.6 281.59 -2.6 284.5 -2.6 C287.41 -2.6 289.59 2.6 292.5 2.6 C295.41 2.6 297.59 -2.6 300.5 -2.6 C303.41 -2.6 305.59 2.6 308.5 2.6 C311.41 2.6 313.59 -2.6 316.5 -2.6 C319.41 -2.6 321.59 2.6 324.5 2.6 C327.41 2.6 329.59 -2.6 332.5 -2.6 C335.41 -2.6 337.59 2.6 340.5 2.6 C343.41 2.6 345.59 -2.6 348.5 -2.6 C351.41 -2.6 353.59 2.6 356.5 2.6"/></svg>
<span class="rc" style="left:481.44px;top:367px;font-size:31.63px">�</span>
<span class="t " style="left:513.19px;top:367px;transform:scaleX(1.0270)">moniqu</span>
<svg class="wv" style="left:514.0px;top:404.1px" width="130.0" height="12" viewBox="0 -6 130.0 12"><path d="M-11.5 2.6 C-8.59 2.6 -6.41 -2.6 -3.5 -2.6 C-0.59 -2.6 1.59 2.6 4.5 2.6 C7.41 2.6 9.59 -2.6 12.5 -2.6 C15.41 -2.6 17.59 2.6 20.5 2.6 C23.41 2.6 25.59 -2.6 28.5 -2.6 C31.41 -2.6 33.59 2.6 36.5 2.6 C39.41 2.6 41.59 -2.6 44.5 -2.6 C47.41 -2.6 49.59 2.6 52.5 2.6 C55.41 2.6 57.59 -2.6 60.5 -2.6 C63.41 -2.6 65.59 2.6 68.5 2.6 C71.41 2.6 73.59 -2.6 76.5 -2.6 C79.41 -2.6 81.59 2.6 84.5 2.6 C87.41 2.6 89.59 -2.6 92.5 -2.6 C95.41 -2.6 97.59 2.6 100.5 2.6 C103.41 2.6 105.59 -2.6 108.5 -2.6 C111.41 -2.6 113.59 2.6 116.5 2.6 C119.41 2.6 121.59 -2.6 124.5 -2.6 C127.41 -2.6 129.59 2.6 132.5 2.6 C135.41 2.6 137.59 -2.6 140.5 -2.6"/></svg>
<span class="rc" style="left:639.84px;top:367px;font-size:31.63px">�</span>
</div>
<svg class="ovf" style="left:643px;top:385px" width="11" height="18" viewBox="0 0 11 18"><path d="M1.2 1.2 L9.3 9 L1.2 16.8 Z" fill="#ee1c25" stroke="#1a0000" stroke-width="1.2"/></svg>
<span class="t " style="left:656.58px;top:367px;transform:scaleX(1.0305)">Param</span>
<svg class="wv" style="left:657.4px;top:404.1px" width="113.4" height="12" viewBox="0 -6 113.4 12"><path d="M-11.5 2.6 C-8.59 2.6 -6.41 -2.6 -3.5 -2.6 C-0.59 -2.6 1.59 2.6 4.5 2.6 C7.41 2.6 9.59 -2.6 12.5 -2.6 C15.41 -2.6 17.59 2.6 20.5 2.6 C23.41 2.6 25.59 -2.6 28.5 -2.6 C31.41 -2.6 33.59 2.6 36.5 2.6 C39.41 2.6 41.59 -2.6 44.5 -2.6 C47.41 -2.6 49.59 2.6 52.5 2.6 C55.41 2.6 57.59 -2.6 60.5 -2.6 C63.41 -2.6 65.59 2.6 68.5 2.6 C71.41 2.6 73.59 -2.6 76.5 -2.6 C79.41 -2.6 81.59 2.6 84.5 2.6 C87.41 2.6 89.59 -2.6 92.5 -2.6 C95.41 -2.6 97.59 2.6 100.5 2.6 C103.41 2.6 105.59 -2.6 108.5 -2.6 C111.41 -2.6 113.59 2.6 116.5 2.6 C119.41 2.6 121.59 -2.6 124.5 -2.6"/></svg>
<span class="rc" style="left:770.74px;top:367px;font-size:31.83px">�</span>
<span class="t " style="left:803.80px;top:367px;transform:scaleX(0.9660)">tre</span>
<svg class="wv" style="left:803.4px;top:404.1px" width="43.6" height="12" viewBox="0 -6 43.6 12"><path d="M-11.5 2.6 C-8.59 2.6 -6.41 -2.6 -3.5 -2.6 C-0.59 -2.6 1.59 2.6 4.5 2.6 C7.41 2.6 9.59 -2.6 12.5 -2.6 C15.41 -2.6 17.59 2.6 20.5 2.6 C23.41 2.6 25.59 -2.6 28.5 -2.6 C31.41 -2.6 33.59 2.6 36.5 2.6 C39.41 2.6 41.59 -2.6 44.5 -2.6 C47.41 -2.6 49.59 2.6 52.5 2.6"/></svg>
<span class="t " style="left:916.55px;top:367px;transform:scaleX(1.0425)">Longitude</span>
<span class="t " style="left:1103.96px;top:367px;transform:scaleX(1.0370)">Latitude</span>
<span class="t " style="left:1264.42px;top:367px;transform:scaleX(1.0160)">Pente...R</span>
<svg class="wv" style="left:1265.2px;top:404.1px" width="111.8" height="12" viewBox="0 -6 111.8 12"><path d="M-11.5 2.6 C-8.59 2.6 -6.41 -2.6 -3.5 -2.6 C-0.59 -2.6 1.59 2.6 4.5 2.6 C7.41 2.6 9.59 -2.6 12.5 -2.6 C15.41 -2.6 17.59 2.6 20.5 2.6 C23.41 2.6 25.59 -2.6 28.5 -2.6 C31.41 -2.6 33.59 2.6 36.5 2.6 C39.41 2.6 41.59 -2.6 44.5 -2.6 C47.41 -2.6 49.59 2.6 52.5 2.6 C55.41 2.6 57.59 -2.6 60.5 -2.6 C63.41 -2.6 65.59 2.6 68.5 2.6 C71.41 2.6 73.59 -2.6 76.5 -2.6 C79.41 -2.6 81.59 2.6 84.5 2.6 C87.41 2.6 89.59 -2.6 92.5 -2.6 C95.41 -2.6 97.59 2.6 100.5 2.6 C103.41 2.6 105.59 -2.6 108.5 -2.6 C111.41 -2.6 113.59 2.6 116.5 2.6 C119.41 2.6 121.59 -2.6 124.5 -2.6"/></svg>
<span class="rc" style="left:1424.74px;top:367px;font-size:31.63px">�</span>
<span class="t " style="left:1457.39px;top:367px;transform:scaleX(1.0350)">gression</span>
<svg class="wv" style="left:1457.6px;top:404.1px" width="147.0" height="12" viewBox="0 -6 147.0 12"><path d="M-11.5 2.6 C-8.59 2.6 -6.41 -2.6 -3.5 -2.6 C-0.59 -2.6 1.59 2.6 4.5 2.6 C7.41 2.6 9.59 -2.6 12.5 -2.6 C15.41 -2.6 17.59 2.6 20.5 2.6 C23.41 2.6 25.59 -2.6 28.5 -2.6 C31.41 -2.6 33.59 2.6 36.5 2.6 C39.41 2.6 41.59 -2.6 44.5 -2.6 C47.41 -2.6 49.59 2.6 52.5 2.6 C55.41 2.6 57.59 -2.6 60.5 -2.6 C63.41 -2.6 65.59 2.6 68.5 2.6 C71.41 2.6 73.59 -2.6 76.5 -2.6 C79.41 -2.6 81.59 2.6 84.5 2.6 C87.41 2.6 89.59 -2.6 92.5 -2.6 C95.41 -2.6 97.59 2.6 100.5 2.6 C103.41 2.6 105.59 -2.6 108.5 -2.6 C111.41 -2.6 113.59 2.6 116.5 2.6 C119.41 2.6 121.59 -2.6 124.5 -2.6 C127.41 -2.6 129.59 2.6 132.5 2.6 C135.41 2.6 137.59 -2.6 140.5 -2.6 C143.41 -2.6 145.59 2.6 148.5 2.6 C151.41 2.6 153.59 -2.6 156.5 -2.6"/></svg>
<span class="t " style="left:1728.40px;top:367px;transform:scaleX(1.0230)">P...Value</span>
<span class="t " style="left:2182.98px;top:367px;transform:scaleX(1.0300)">R</span>
<span class="t " style="left:52.99px;top:415px;transform:scaleX(1.0356)">-0.8092 45.3811</span>
<span class="t " style="left:656.59px;top:415px;transform:scaleX(1.0290)">Chlorophylle a</span>
<svg class="wv" style="left:657.4px;top:452.1px" width="215.1" height="12" viewBox="0 -6 215.1 12"><path d="M-11.5 2.6 C-8.59 2.6 -6.41 -2.6 -3.5 -2.6 C-0.59 -2.6 1.59 2.6 4.5 2.6 C7.41 2.6 9.59 -2.6 12.5 -2.6 C15.41 -2.6 17.59 2.6 20.5 2.6 C23.41 2.6 25.59 -2.6 28.5 -2.6 C31.41 -2.6 33.59 2.6 36.5 2.6 C39.41 2.6 41.59 -2.6 44.5 -2.6 C47.41 -2.6 49.59 2.6 52.5 2.6 C55.41 2.6 57.59 -2.6 60.5 -2.6 C63.41 -2.6 65.59 2.6 68.5 2.6 C71.41 2.6 73.59 -2.6 76.5 -2.6 C79.41 -2.6 81.59 2.6 84.5 2.6 C87.41 2.6 89.59 -2.6 92.5 -2.6 C95.41 -2.6 97.59 2.6 100.5 2.6 C103.41 2.6 105.59 -2.6 108.5 -2.6 C111.41 -2.6 113.59 2.6 116.5 2.6 C119.41 2.6 121.59 -2.6 124.5 -2.6 C127.41 -2.6 129.59 2.6 132.5 2.6 C135.41 2.6 137.59 -2.6 140.5 -2.6 C143.41 -2.6 145.59 2.6 148.5 2.6 C151.41 2.6 153.59 -2.6 156.5 -2.6 C159.41 -2.6 161.59 2.6 164.5 2.6 C167.41 2.6 169.59 -2.6 172.5 -2.6 C175.41 -2.6 177.59 2.6 180.5 2.6 C183.41 2.6 185.59 -2.6 188.5 -2.6 C191.41 -2.6 193.59 2.6 196.5 2.6 C199.41 2.6 201.59 -2.6 204.5 -2.6 C207.41 -2.6 209.59 2.6 212.5 2.6 C215.41 2.6 217.59 -2.6 220.5 -2.6 C223.41 -2.6 225.59 2.6 228.5 2.6"/></svg>
<span class="t " style="left:967.49px;top:415px;transform:scaleX(1.0290)">-0.8092</span>
<span class="t " style="left:1117.04px;top:415px;transform:scaleX(1.0420)">45.3811</span>
<span class="t " style="left:1305.36px;top:415px;transform:scaleX(1.0470)">-0.00545529443466545</span>
<span class="t " style="left:1755.90px;top:415px;transform:scaleX(1.0430)">1.46337199623493E-54</span>
<span class="t " style="left:52.99px;top:463px;transform:scaleX(1.0356)">-0.8092 45.3911</span>
<span class="t " style="left:656.59px;top:463px;transform:scaleX(1.0290)">Chlorophylle a</span>
<svg class="wv" style="left:657.4px;top:500.1px" width="215.1" height="12" viewBox="0 -6 215.1 12"><path d="M-11.5 2.6 C-8.59 2.6 -6.41 -2.6 -3.5 -2.6 C-0.59 -2.6 1.59 2.6 4.5 2.6 C7.41 2.6 9.59 -2.6 12.5 -2.6 C15.41 -2.6 17.59 2.6 20.5 2.6 C23.41 2.6 25.59 -2.6 28.5 -2.6 C31.41 -2.6 33.59 2.6 36.5 2.6 C39.41 2.6 41.59 -2.6 44.5 -2.6 C47.41 -2.6 49.59 2.6 52.5 2.6 C55.41 2.6 57.59 -2.6 60.5 -2.6 C63.41 -2.6 65.59 2.6 68.5 2.6 C71.41 2.6 73.59 -2.6 76.5 -2.6 C79.41 -2.6 81.59 2.6 84.5 2.6 C87.41 2.6 89.59 -2.6 92.5 -2.6 C95.41 -2.6 97.59 2.6 100.5 2.6 C103.41 2.6 105.59 -2.6 108.5 -2.6 C111.41 -2.6 113.59 2.6 116.5 2.6 C119.41 2.6 121.59 -2.6 124.5 -2.6 C127.41 -2.6 129.59 2.6 132.5 2.6 C135.41 2.6 137.59 -2.6 140.5 -2.6 C143.41 -2.6 145.59 2.6 148.5 2.6 C151.41 2.6 153.59 -2.6 156.5 -2.6 C159.41 -2.6 161.59 2.6 164.5 2.6 C167.41 2.6 169.59 -2.6 172.5 -2.6 C175.41 -2.6 177.59 2.6 180.5 2.6 C183.41 2.6 185.59 -2.6 188.5 -2.6 C191.41 -2.6 193.59 2.6 196.5 2.6 C199.41 2.6 201.59 -2.6 204.5 -2.6 C207.41 -2.6 209.59 2.6 212.5 2.6 C215.41 2.6 217.59 -2.6 220.5 -2.6 C223.41 -2.6 225.59 2.6 228.5 2.6"/></svg>
<span class="t " style="left:967.49px;top:463px;transform:scaleX(1.0290)">-0.8092</span>
<span class="t " style="left:1117.04px;top:463px;transform:scaleX(1.0420)">45.3911</span>
<span class="t " style="left:1305.36px;top:463px;transform:scaleX(1.0470)">-0.00336931003301783</span>
<span class="t " style="left:1756.51px;top:463px;transform:scaleX(1.0430)">6.58746761436775E-95</span>
<span class="t " style="left:52.99px;top:511px;transform:scaleX(1.0356)">-0.8092 45.4111</span>
<span class="t " style="left:656.59px;top:511px;transform:scaleX(1.0290)">Chlorophylle a</span>
<svg class="wv" style="left:657.4px;top:548.1px" width="215.1" height="12" viewBox="0 -6 215.1 12"><path d="M-11.5 2.6 C-8.59 2.6 -6.41 -2.6 -3.5 -2.6 C-0.59 -2.6 1.59 2.6 4.5 2.6 C7.41 2.6 9.59 -2.6 12.5 -2.6 C15.41 -2.6 17.59 2.6 20.5 2.6 C23.41 2.6 25.59 -2.6 28.5 -2.6 C31.41 -2.6 33.59 2.6 36.5 2.6 C39.41 2.6 41.59 -2.6 44.5 -2.6 C47.41 -2.6 49.59 2.6 52.5 2.6 C55.41 2.6 57.59 -2.6 60.5 -2.6 C63.41 -2.6 65.59 2.6 68.5 2.6 C71.41 2.6 73.59 -2.6 76.5 -2.6 C79.41 -2.6 81.59 2.6 84.5 2.6 C87.41 2.6 89.59 -2.6 92.5 -2.6 C95.41 -2.6 97.59 2.6 100.5 2.6 C103.41 2.6 105.59 -2.6 108.5 -2.6 C111.41 -2.6 113.59 2.6 116.5 2.6 C119.41 2.6 121.59 -2.6 124.5 -2.6 C127.41 -2.6 129.59 2.6 132.5 2.6 C135.41 2.6 137.59 -2.6 140.5 -2.6 C143.41 -2.6 145.59 2.6 148.5 2.6 C151.41 2.6 153.59 -2.6 156.5 -2.6 C159.41 -2.6 161.59 2.6 164.5 2.6 C167.41 2.6 169.59 -2.6 172.5 -2.6 C175.41 -2.6 177.59 2.6 180.5 2.6 C183.41 2.6 185.59 -2.6 188.5 -2.6 C191.41 -2.6 193.59 2.6 196.5 2.6 C199.41 2.6 201.59 -2.6 204.5 -2.6 C207.41 -2.6 209.59 2.6 212.5 2.6 C215.41 2.6 217.59 -2.6 220.5 -2.6 C223.41 -2.6 225.59 2.6 228.5 2.6"/></svg>
<span class="t " style="left:967.49px;top:511px;transform:scaleX(1.0290)">-0.8092</span>
<span class="t " style="left:1117.04px;top:511px;transform:scaleX(1.0420)">45.4111</span>
<span class="t " style="left:1296.60px;top:511px;transform:scaleX(1.0470)">0.000676452363603718</span>
<span class="t " style="left:1756.51px;top:511px;transform:scaleX(1.0430)">2.43638890139864E-33</span>
<span class="t " style="left:52.99px;top:559px;transform:scaleX(1.0356)">-0.8092 45.4211</span>
<span class="t " style="left:656.59px;top:559px;transform:scaleX(1.0290)">Chlorophylle a</span>
<svg class="wv" style="left:657.4px;top:596.1px" width="215.1" height="12" viewBox="0 -6 215.1 12"><path d="M-11.5 2.6 C-8.59 2.6 -6.41 -2.6 -3.5 -2.6 C-0.59 -2.6 1.59 2.6 4.5 2.6 C7.41 2.6 9.59 -2.6 12.5 -2.6 C15.41 -2.6 17.59 2.6 20.5 2.6 C23.41 2.6 25.59 -2.6 28.5 -2.6 C31.41 -2.6 33.59 2.6 36.5 2.6 C39.41 2.6 41.59 -2.6 44.5 -2.6 C47.41 -2.6 49.59 2.6 52.5 2.6 C55.41 2.6 57.59 -2.6 60.5 -2.6 C63.41 -2.6 65.59 2.6 68.5 2.6 C71.41 2.6 73.59 -2.6 76.5 -2.6 C79.41 -2.6 81.59 2.6 84.5 2.6 C87.41 2.6 89.59 -2.6 92.5 -2.6 C95.41 -2.6 97.59 2.6 100.5 2.6 C103.41 2.6 105.59 -2.6 108.5 -2.6 C111.41 -2.6 113.59 2.6 116.5 2.6 C119.41 2.6 121.59 -2.6 124.5 -2.6 C127.41 -2.6 129.59 2.6 132.5 2.6 C135.41 2.6 137.59 -2.6 140.5 -2.6 C143.41 -2.6 145.59 2.6 148.5 2.6 C151.41 2.6 153.59 -2.6 156.5 -2.6 C159.41 -2.6 161.59 2.6 164.5 2.6 C167.41 2.6 169.59 -2.6 172.5 -2.6 C175.41 -2.6 177.59 2.6 180.5 2.6 C183.41 2.6 185.59 -2.6 188.5 -2.6 C191.41 -2.6 193.59 2.6 196.5 2.6 C199.41 2.6 201.59 -2.6 204.5 -2.6 C207.41 -2.6 209.59 2.6 212.5 2.6 C215.41 2.6 217.59 -2.6 220.5 -2.6 C223.41 -2.6 225.59 2.6 228.5 2.6"/></svg>
<span class="t " style="left:967.49px;top:559px;transform:scaleX(1.0290)">-0.8092</span>
<span class="t " style="left:1117.04px;top:559px;transform:scaleX(1.0420)">45.4211</span>
<span class="t " style="left:1305.36px;top:559px;transform:scaleX(1.0470)">-0.00137777560121362</span>
<span class="t " style="left:1749.08px;top:559px;transform:scaleX(1.0505)">0.000948601648303877</span>
<span class="t " style="left:52.99px;top:607px;transform:scaleX(1.0356)">-0.8092 45.4311</span>
<span class="t " style="left:656.59px;top:607px;transform:scaleX(1.0290)">Chlorophylle a</span>
<svg class="wv" style="left:657.4px;top:644.1px" width="215.1" height="12" viewBox="0 -6 215.1 12"><path d="M-11.5 2.6 C-8.59 2.6 -6.41 -2.6 -3.5 -2.6 C-0.59 -2.6 1.59 2.6 4.5 2.6 C7.41 2.6 9.59 -2.6 12.5 -2.6 C15.41 -2.6 17.59 2.6 20.5 2.6 C23.41 2.6 25.59 -2.6 28.5 -2.6 C31.41 -2.6 33.59 2.6 36.5 2.6 C39.41 2.6 41.59 -2.6 44.5 -2.6 C47.41 -2.6 49.59 2.6 52.5 2.6 C55.41 2.6 57.59 -2.6 60.5 -2.6 C63.41 -2.6 65.59 2.6 68.5 2.6 C71.41 2.6 73.59 -2.6 76.5 -2.6 C79.41 -2.6 81.59 2.6 84.5 2.6 C87.41 2.6 89.59 -2.6 92.5 -2.6 C95.41 -2.6 97.59 2.6 100.5 2.6 C103.41 2.6 105.59 -2.6 108.5 -2.6 C111.41 -2.6 113.59 2.6 116.5 2.6 C119.41 2.6 121.59 -2.6 124.5 -2.6 C127.41 -2.6 129.59 2.6 132.5 2.6 C135.41 2.6 137.59 -2.6 140.5 -2.6 C143.41 -2.6 145.59 2.6 148.5 2.6 C151.41 2.6 153.59 -2.6 156.5 -2.6 C159.41 -2.6 161.59 2.6 164.5 2.6 C167.41 2.6 169.59 -2.6 172.5 -2.6 C175.41 -2.6 177.59 2.6 180.5 2.6 C183.41 2.6 185.59 -2.6 188.5 -2.6 C191.41 -2.6 193.59 2.6 196.5 2.6 C199.41 2.6 201.59 -2.6 204.5 -2.6 C207.41 -2.6 209.59 2.6 212.5 2.6 C215.41 2.6 217.59 -2.6 220.5 -2.6 C223.41 -2.6 225.59 2.6 228.5 2.6"/></svg>
<span class="t " style="left:967.49px;top:607px;transform:scaleX(1.0290)">-0.8092</span>
<span class="t " style="left:1117.04px;top:607px;transform:scaleX(1.0420)">45.4311</span>
<span class="t " style="left:1305.36px;top:607px;transform:scaleX(1.0470)">-0.00235877467386209</span>
<span class="t " style="left:1792.90px;top:607px;transform:scaleX(1.0505)">0.0747956619084692</span>
<span class="t " style="left:52.99px;top:655px;transform:scaleX(1.0356)">-0.8092 45.4411</span>
<span class="t " style="left:656.59px;top:655px;transform:scaleX(1.0290)">Chlorophylle a</span>
<svg class="wv" style="left:657.4px;top:692.1px" width="215.1" height="12" viewBox="0 -6 215.1 12"><path d="M-11.5 2.6 C-8.59 2.6 -6.41 -2.6 -3.5 -2.6 C-0.59 -2.6 1.59 2.6 4.5 2.6 C7.41 2.6 9.59 -2.6 12.5 -2.6 C15.41 -2.6 17.59 2.6 20.5 2.6 C23.41 2.6 25.59 -2.6 28.5 -2.6 C31.41 -2.6 33.59 2.6 36.5 2.6 C39.41 2.6 41.59 -2.6 44.5 -2.6 C47.41 -2.6 49.59 2.6 52.5 2.6 C55.41 2.6 57.59 -2.6 60.5 -2.6 C63.41 -2.6 65.59 2.6 68.5 2.6 C71.41 2.6 73.59 -2.6 76.5 -2.6 C79.41 -2.6 81.59 2.6 84.5 2.6 C87.41 2.6 89.59 -2.6 92.5 -2.6 C95.41 -2.6 97.59 2.6 100.5 2.6 C103.41 2.6 105.59 -2.6 108.5 -2.6 C111.41 -2.6 113.59 2.6 116.5 2.6 C119.41 2.6 121.59 -2.6 124.5 -2.6 C127.41 -2.6 129.59 2.6 132.5 2.6 C135.41 2.6 137.59 -2.6 140.5 -2.6 C143.41 -2.6 145.59 2.6 148.5 2.6 C151.41 2.6 153.59 -2.6 156.5 -2.6 C159.41 -2.6 161.59 2.6 164.5 2.6 C167.41 2.6 169.59 -2.6 172.5 -2.6 C175.41 -2.6 177.59 2.6 180.5 2.6 C183.41 2.6 185.59 -2.6 188.5 -2.6 C191.41 -2.6 193.59 2.6 196.5 2.6 C199.41 2.6 201.59 -2.6 204.5 -2.6 C207.41 -2.6 209.59 2.6 212.5 2.6 C215.41 2.6 217.59 -2.6 220.5 -2.6 C223.41 -2.6 225.59 2.6 228.5 2.6"/></svg>
<span class="t " style="left:967.49px;top:655px;transform:scaleX(1.0290)">-0.8092</span>
<span class="t " style="left:1117.04px;top:655px;transform:scaleX(1.0420)">45.4411</span>
<span class="t " style="left:1305.36px;top:655px;transform:scaleX(1.0470)">-0.00138560085192883</span>
<span class="t " style="left:1756.51px;top:655px;transform:scaleX(1.0430)">5.83308414480778E-17</span>
<span class="t " style="left:52.99px;top:703px;transform:scaleX(1.0356)">-0.8242 45.3911</span>
<span class="t " style="left:656.59px;top:703px;transform:scaleX(1.0290)">Chlorophylle a</span>
<svg class="wv" style="left:657.4px;top:740.1px" width="215.1" height="12" viewBox="0 -6 215.1 12"><path d="M-11.5 2.6 C-8.59 2.6 -6.41 -2.6 -3.5 -2.6 C-0.59 -2.6 1.59 2.6 4.5 2.6 C7.41 2.6 9.59 -2.6 12.5 -2.6 C15.41 -2.6 17.59 2.6 20.5 2.6 C23.41 2.6 25.59 -2.6 28.5 -2.6 C31.41 -2.6 33.59 2.6 36.5 2.6 C39.41 2.6 41.59 -2.6 44.5 -2.6 C47.41 -2.6 49.59 2.6 52.5 2.6 C55.41 2.6 57.59 -2.6 60.5 -2.6 C63.41 -2.6 65.59 2.6 68.5 2.6 C71.41 2.6 73.59 -2.6 76.5 -2.6 C79.41 -2.6 81.59 2.6 84.5 2.6 C87.41 2.6 89.59 -2.6 92.5 -2.6 C95.41 -2.6 97.59 2.6 100.5 2.6 C103.41 2.6 105.59 -2.6 108.5 -2.6 C111.41 -2.6 113.59 2.6 116.5 2.6 C119.41 2.6 121.59 -2.6 124.5 -2.6 C127.41 -2.6 129.59 2.6 132.5 2.6 C135.41 2.6 137.59 -2.6 140.5 -2.6 C143.41 -2.6 145.59 2.6 148.5 2.6 C151.41 2.6 153.59 -2.6 156.5 -2.6 C159.41 -2.6 161.59 2.6 164.5 2.6 C167.41 2.6 169.59 -2.6 172.5 -2.6 C175.41 -2.6 177.59 2.6 180.5 2.6 C183.41 2.6 185.59 -2.6 188.5 -2.6 C191.41 -2.6 193.59 2.6 196.5 2.6 C199.41 2.6 201.59 -2.6 204.5 -2.6 C207.41 -2.6 209.59 2.6 212.5 2.6 C215.41 2.6 217.59 -2.6 220.5 -2.6 C223.41 -2.6 225.59 2.6 228.5 2.6"/></svg>
<span class="t " style="left:967.49px;top:703px;transform:scaleX(1.0290)">-0.8242</span>
<span class="t " style="left:1117.04px;top:703px;transform:scaleX(1.0420)">45.3911</span>
<span class="t " style="left:1305.36px;top:703px;transform:scaleX(1.0470)">-0.00419096575460419</span>
<span class="t " style="left:1732.67px;top:703px;transform:scaleX(1.0465)">2.60661424566382E-184</span>
<span class="t " style="left:52.99px;top:751px;transform:scaleX(1.0356)">-0.8242 45.4011</span>
<span class="t " style="left:656.59px;top:751px;transform:scaleX(1.0290)">Chlorophylle a</span>
<svg class="wv" style="left:657.4px;top:788.1px" width="215.1" height="12" viewBox="0 -6 215.1 12"><path d="M-11.5 2.6 C-8.59 2.6 -6.41 -2.6 -3.5 -2.6 C-0.59 -2.6 1.59 2.6 4.5 2.6 C7.41 2.6 9.59 -2.6 12.5 -2.6 C15.41 -2.6 17.59 2.6 20.5 2.6 C23.41 2.6 25.59 -2.6 28.5 -2.6 C31.41 -2.6 33.59 2.6 36.5 2.6 C39.41 2.6 41.59 -2.6 44.5 -2.6 C47.41 -2.6 49.59 2.6 52.5 2.6 C55.41 2.6 57.59 -2.6 60.5 -2.6 C63.41 -2.6 65.59 2.6 68.5 2.6 C71.41 2.6 73.59 -2.6 76.5 -2.6 C79.41 -2.6 81.59 2.6 84.5 2.6 C87.41 2.6 89.59 -2.6 92.5 -2.6 C95.41 -2.6 97.59 2.6 100.5 2.6 C103.41 2.6 105.59 -2.6 108.5 -2.6 C111.41 -2.6 113.59 2.6 116.5 2.6 C119.41 2.6 121.59 -2.6 124.5 -2.6 C127.41 -2.6 129.59 2.6 132.5 2.6 C135.41 2.6 137.59 -2.6 140.5 -2.6 C143.41 -2.6 145.59 2.6 148.5 2.6 C151.41 2.6 153.59 -2.6 156.5 -2.6 C159.41 -2.6 161.59 2.6 164.5 2.6 C167.41 2.6 169.59 -2.6 172.5 -2.6 C175.41 -2.6 177.59 2.6 180.5 2.6 C183.41 2.6 185.59 -2.6 188.5 -2.6 C191.41 -2.6 193.59 2.6 196.5 2.6 C199.41 2.6 201.59 -2.6 204.5 -2.6 C207.41 -2.6 209.59 2.6 212.5 2.6 C215.41 2.6 217.59 -2.6 220.5 -2.6 C223.41 -2.6 225.59 2.6 228.5 2.6"/></svg>
<span class="t " style="left:967.49px;top:751px;transform:scaleX(1.0290)">-0.8242</span>
<span class="t " style="left:1117.04px;top:751px;transform:scaleX(1.0420)">45.4011</span>
<span class="t " style="left:1305.36px;top:751px;transform:scaleX(1.0470)">-0.00028869065743039</span>
<span class="t " style="left:1814.81px;top:751px;transform:scaleX(1.0505)">0.346828401759728</span>
<span class="t " style="left:52.99px;top:799px;transform:scaleX(1.0356)">-0.8242 45.4111</span>
<span class="t " style="left:656.59px;top:799px;transform:scaleX(1.0290)">Chlorophylle a</span>
<svg class="wv" style="left:657.4px;top:836.1px" width="215.1" height="12" viewBox="0 -6 215.1 12"><path d="M-11.5 2.6 C-8.59 2.6 -6.41 -2.6 -3.5 -2.6 C-0.59 -2.6 1.59 2.6 4.5 2.6 C7.41 2.6 9.59 -2.6 12.5 -2.6 C15.41 -2.6 17.59 2.6 20.5 2.6 C23.41 2.6 25.59 -2.6 28.5 -2.6 C31.41 -2.6 33.59 2.6 36.5 2.6 C39.41 2.6 41.59 -2.6 44.5 -2.6 C47.41 -2.6 49.59 2.6 52.5 2.6 C55.41 2.6 57.59 -2.6 60.5 -2.6 C63.41 -2.6 65.59 2.6 68.5 2.6 C71.41 2.6 73.59 -2.6 76.5 -2.6 C79.41 -2.6 81.59 2.6 84.5 2.6 C87.41 2.6 89.59 -2.6 92.5 -2.6 C95.41 -2.6 97.59 2.6 100.5 2.6 C103.41 2.6 105.59 -2.6 108.5 -2.6 C111.41 -2.6 113.59 2.6 116.5 2.6 C119.41 2.6 121.59 -2.6 124.5 -2.6 C127.41 -2.6 129.59 2.6 132.5 2.6 C135.41 2.6 137.59 -2.6 140.5 -2.6 C143.41 -2.6 145.59 2.6 148.5 2.6 C151.41 2.6 153.59 -2.6 156.5 -2.6 C159.41 -2.6 161.59 2.6 164.5 2.6 C167.41 2.6 169.59 -2.6 172.5 -2.6 C175.41 -2.6 177.59 2.6 180.5 2.6 C183.41 2.6 185.59 -2.6 188.5 -2.6 C191.41 -2.6 193.59 2.6 196.5 2.6 C199.41 2.6 201.59 -2.6 204.5 -2.6 C207.41 -2.6 209.59 2.6 212.5 2.6 C215.41 2.6 217.59 -2.6 220.5 -2.6 C223.41 -2.6 225.59 2.6 228.5 2.6"/></svg>
<span class="t " style="left:967.49px;top:799px;transform:scaleX(1.0290)">-0.8242</span>
<span class="t " style="left:1117.04px;top:799px;transform:scaleX(1.0420)">45.4111</span>
<span class="t " style="left:1282.06px;top:799px;transform:scaleX(1.0505)">-0.000964848722105116</span>
<span class="t " style="left:1756.51px;top:799px;transform:scaleX(1.0430)">2.86820833605268E-08</span>
<span class="t " style="left:52.99px;top:847px;transform:scaleX(1.0356)">-0.8242 45.4211</span>
<span class="t " style="left:656.59px;top:847px;transform:scaleX(1.0290)">Chlorophylle a</span>
<svg class="wv" style="left:657.4px;top:884.1px" width="215.1" height="12" viewBox="0 -6 215.1 12"><path d="M-11.5 2.6 C-8.59 2.6 -6.41 -2.6 -3.5 -2.6 C-0.59 -2.6 1.59 2.6 4.5 2.6 C7.41 2.6 9.59 -2.6 12.5 -2.6 C15.41 -2.6 17.59 2.6 20.5 2.6 C23.41 2.6 25.59 -2.6 28.5 -2.6 C31.41 -2.6 33.59 2.6 36.5 2.6 C39.41 2.6 41.59 -2.6 44.5 -2.6 C47.41 -2.6 49.59 2.6 52.5 2.6 C55.41 2.6 57.59 -2.6 60.5 -2.6 C63.41 -2.6 65.59 2.6 68.5 2.6 C71.41 2.6 73.59 -2.6 76.5 -2.6 C79.41 -2.6 81.59 2.6 84.5 2.6 C87.41 2.6 89.59 -2.6 92.5 -2.6 C95.41 -2.6 97.59 2.6 100.5 2.6 C103.41 2.6 105.59 -2.6 108.5 -2.6 C111.41 -2.6 113.59 2.6 116.5 2.6 C119.41 2.6 121.59 -2.6 124.5 -2.6 C127.41 -2.6 129.59 2.6 132.5 2.6 C135.41 2.6 137.59 -2.6 140.5 -2.6 C143.41 -2.6 145.59 2.6 148.5 2.6 C151.41 2.6 153.59 -2.6 156.5 -2.6 C159.41 -2.6 161.59 2.6 164.5 2.6 C167.41 2.6 169.59 -2.6 172.5 -2.6 C175.41 -2.6 177.59 2.6 180.5 2.6 C183.41 2.6 185.59 -2.6 188.5 -2.6 C191.41 -2.6 193.59 2.6 196.5 2.6 C199.41 2.6 201.59 -2.6 204.5 -2.6 C207.41 -2.6 209.59 2.6 212.5 2.6 C215.41 2.6 217.59 -2.6 220.5 -2.6 C223.41 -2.6 225.59 2.6 228.5 2.6"/></svg>
<span class="t " style="left:967.49px;top:847px;transform:scaleX(1.0290)">-0.8242</span>
<span class="t " style="left:1117.04px;top:847px;transform:scaleX(1.0420)">45.4211</span>
<span class="t " style="left:1302.61px;top:847px;transform:scaleX(1.0430)">8.17847868361793E-05</span>
<span class="t " style="left:1792.28px;top:847px;transform:scaleX(1.0505)">0.0764135558124954</span>
<span class="t " style="left:52.99px;top:895px;transform:scaleX(1.0356)">-0.8242 45.4311</span>
<span class="t " style="left:656.59px;top:895px;transform:scaleX(1.0290)">Chlorophylle a</span>
<svg class="wv" style="left:657.4px;top:932.1px" width="215.1" height="12" viewBox="0 -6 215.1 12"><path d="M-11.5 2.6 C-8.59 2.6 -6.41 -2.6 -3.5 -2.6 C-0.59 -2.6 1.59 2.6 4.5 2.6 C7.41 2.6 9.59 -2.6 12.5 -2.6 C15.41 -2.6 17.59 2.6 20.5 2.6 C23.41 2.6 25.59 -2.6 28.5 -2.6 C31.41 -2.6 33.59 2.6 36.5 2.6 C39.41 2.6 41.59 -2.6 44.5 -2.6 C47.41 -2.6 49.59 2.6 52.5 2.6 C55.41 2.6 57.59 -2.6 60.5 -2.6 C63.41 -2.6 65.59 2.6 68.5 2.6 C71.41 2.6 73.59 -2.6 76.5 -2.6 C79.41 -2.6 81.59 2.6 84.5 2.6 C87.41 2.6 89.59 -2.6 92.5 -2.6 C95.41 -2.6 97.59 2.6 100.5 2.6 C103.41 2.6 105.59 -2.6 108.5 -2.6 C111.41 -2.6 113.59 2.6 116.5 2.6 C119.41 2.6 121.59 -2.6 124.5 -2.6 C127.41 -2.6 129.59 2.6 132.5 2.6 C135.41 2.6 137.59 -2.6 140.5 -2.6 C143.41 -2.6 145.59 2.6 148.5 2.6 C151.41 2.6 153.59 -2.6 156.5 -2.6 C159.41 -2.6 161.59 2.6 164.5 2.6 C167.41 2.6 169.59 -2.6 172.5 -2.6 C175.41 -2.6 177.59 2.6 180.5 2.6 C183.41 2.6 185.59 -2.6 188.5 -2.6 C191.41 -2.6 193.59 2.6 196.5 2.6 C199.41 2.6 201.59 -2.6 204.5 -2.6 C207.41 -2.6 209.59 2.6 212.5 2.6 C215.41 2.6 217.59 -2.6 220.5 -2.6 C223.41 -2.6 225.59 2.6 228.5 2.6"/></svg>
<span class="t " style="left:967.49px;top:895px;transform:scaleX(1.0290)">-0.8242</span>
<span class="t " style="left:1117.04px;top:895px;transform:scaleX(1.0420)">45.4311</span>
<span class="t " style="left:1318.44px;top:895px;transform:scaleX(1.0470)">0.00289636996275679</span>
<span class="t " style="left:1733.28px;top:895px;transform:scaleX(1.0465)">1.13965486571397E-245</span>
<span class="t " style="left:52.99px;top:943px;transform:scaleX(1.0356)">-0.8242 45.4411</span>
<span class="t " style="left:656.59px;top:943px;transform:scaleX(1.0290)">Chlorophylle a</span>
<svg class="wv" style="left:657.4px;top:980.1px" width="215.1" height="12" viewBox="0 -6 215.1 12"><path d="M-11.5 2.6 C-8.59 2.6 -6.41 -2.6 -3.5 -2.6 C-0.59 -2.6 1.59 2.6 4.5 2.6 C7.41 2.6 9.59 -2.6 12.5 -2.6 C15.41 -2.6 17.59 2.6 20.5 2.6 C23.41 2.6 25.59 -2.6 28.5 -2.6 C31.41 -2.6 33.59 2.6 36.5 2.6 C39.41 2.6 41.59 -2.6 44.5 -2.6 C47.41 -2.6 49.59 2.6 52.5 2.6 C55.41 2.6 57.59 -2.6 60.5 -2.6 C63.41 -2.6 65.59 2.6 68.5 2.6 C71.41 2.6 73.59 -2.6 76.5 -2.6 C79.41 -2.6 81.59 2.6 84.5 2.6 C87.41 2.6 89.59 -2.6 92.5 -2.6 C95.41 -2.6 97.59 2.6 100.5 2.6 C103.41 2.6 105.59 -2.6 108.5 -2.6 C111.41 -2.6 113.59 2.6 116.5 2.6 C119.41 2.6 121.59 -2.6 124.5 -2.6 C127.41 -2.6 129.59 2.6 132.5 2.6 C135.41 2.6 137.59 -2.6 140.5 -2.6 C143.41 -2.6 145.59 2.6 148.5 2.6 C151.41 2.6 153.59 -2.6 156.5 -2.6 C159.41 -2.6 161.59 2.6 164.5 2.6 C167.41 2.6 169.59 -2.6 172.5 -2.6 C175.41 -2.6 177.59 2.6 180.5 2.6 C183.41 2.6 185.59 -2.6 188.5 -2.6 C191.41 -2.6 193.59 2.6 196.5 2.6 C199.41 2.6 201.59 -2.6 204.5 -2.6 C207.41 -2.6 209.59 2.6 212.5 2.6 C215.41 2.6 217.59 -2.6 220.5 -2.6 C223.41 -2.6 225.59 2.6 228.5 2.6"/></svg>
<span class="t " style="left:967.49px;top:943px;transform:scaleX(1.0290)">-0.8242</span>
<span class="t " style="left:1117.04px;top:943px;transform:scaleX(1.0420)">45.4411</span>
<span class="t " style="left:1327.20px;top:943px;transform:scaleX(1.0470)">-0.0031784558866097</span>
<span class="t " style="left:1756.51px;top:943px;transform:scaleX(1.0430)">1.51853054787196E-05</span>
<span class="t " style="left:52.99px;top:991px;transform:scaleX(1.0356)">-0.8242 45.4511</span>
<span class="t " style="left:656.59px;top:991px;transform:scaleX(1.0290)">Chlorophylle a</span>
<svg class="wv" style="left:657.4px;top:1028.1px" width="215.1" height="12" viewBox="0 -6 215.1 12"><path d="M-11.5 2.6 C-8.59 2.6 -6.41 -2.6 -3.5 -2.6 C-0.59 -2.6 1.59 2.6 4.5 2.6 C7.41 2.6 9.59 -2.6 12.5 -2.6 C15.41 -2.6 17.59 2.6 20.5 2.6 C23.41 2.6 25.59 -2.6 28.5 -2.6 C31.41 -2.6 33.59 2.6 36.5 2.6 C39.41 2.6 41.59 -2.6 44.5 -2.6 C47.41 -2.6 49.59 2.6 52.5 2.6 C55.41 2.6 57.59 -2.6 60.5 -2.6 C63.41 -2.6 65.59 2.6 68.5 2.6 C71.41 2.6 73.59 -2.6 76.5 -2.6 C79.41 -2.6 81.59 2.6 84.5 2.6 C87.41 2.6 89.59 -2.6 92.5 -2.6 C95.41 -2.6 97.59 2.6 100.5 2.6 C103.41 2.6 105.59 -2.6 108.5 -2.6 C111.41 -2.6 113.59 2.6 116.5 2.6 C119.41 2.6 121.59 -2.6 124.5 -2.6 C127.41 -2.6 129.59 2.6 132.5 2.6 C135.41 2.6 137.59 -2.6 140.5 -2.6 C143.41 -2.6 145.59 2.6 148.5 2.6 C151.41 2.6 153.59 -2.6 156.5 -2.6 C159.41 -2.6 161.59 2.6 164.5 2.6 C167.41 2.6 169.59 -2.6 172.5 -2.6 C175.41 -2.6 177.59 2.6 180.5 2.6 C183.41 2.6 185.59 -2.6 188.5 -2.6 C191.41 -2.6 193.59 2.6 196.5 2.6 C199.41 2.6 201.59 -2.6 204.5 -2.6 C207.41 -2.6 209.59 2.6 212.5 2.6 C215.41 2.6 217.59 -2.6 220.5 -2.6 C223.41 -2.6 225.59 2.6 228.5 2.6"/></svg>
<span class="t " style="left:967.49px;top:991px;transform:scaleX(1.0290)">-0.8242</span>
<span class="t " style="left:1117.04px;top:991px;transform:scaleX(1.0420)">45.4511</span>
<span class="t " style="left:1282.06px;top:991px;transform:scaleX(1.0505)">-0.000172146428600398</span>
<span class="t " style="left:1814.81px;top:991px;transform:scaleX(1.0505)">0.592387540146335</span>
</div>
</div></body></html>
